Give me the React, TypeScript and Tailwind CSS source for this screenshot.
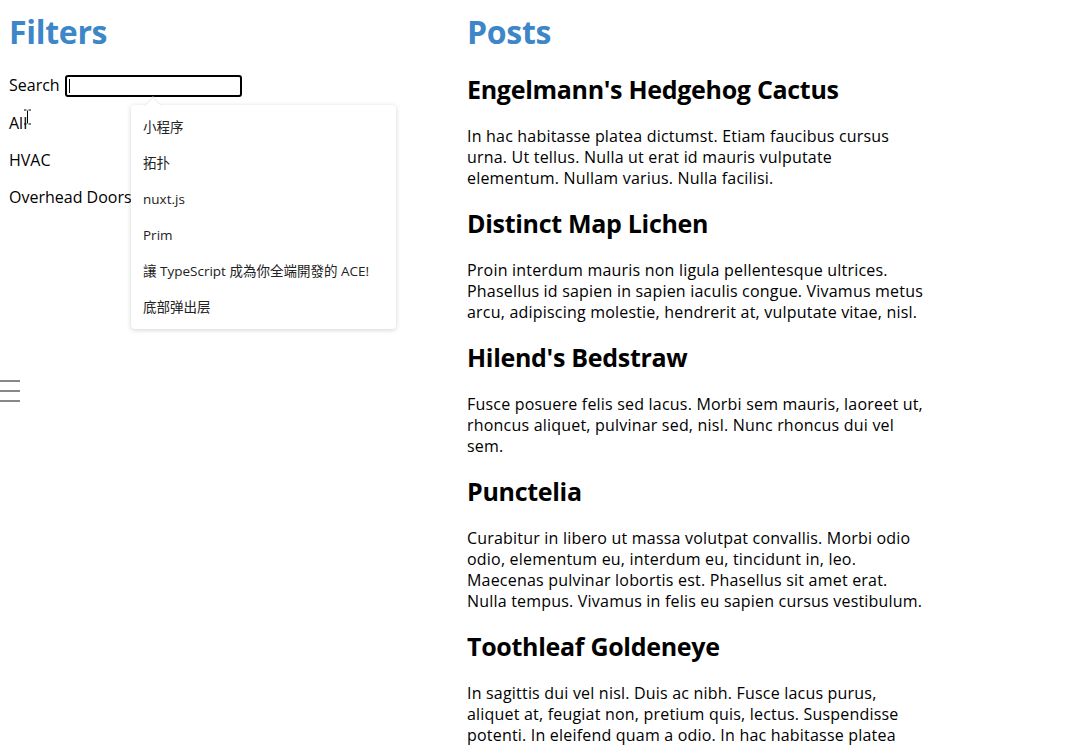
import React from "react";

const filters = ["All", "HVAC", "Overhead Doors"];

const suggestions = [
  "小程序",
  "拓扑",
  "nuxt.js",
  "Prim",
  "讓 TypeScript 成為你全端開發的 ACE!",
  "底部弹出层",
];

const posts = [
  {
    title: "Engelmann's Hedgehog Cactus",
    body: "In hac habitasse platea dictumst. Etiam faucibus cursus urna. Ut tellus. Nulla ut erat id mauris vulputate elementum. Nullam varius. Nulla facilisi.",
  },
  {
    title: "Distinct Map Lichen",
    body: "Proin interdum mauris non ligula pellentesque ultrices. Phasellus id sapien in sapien iaculis congue. Vivamus metus arcu, adipiscing molestie, hendrerit at, vulputate vitae, nisl.",
  },
  {
    title: "Hilend's Bedstraw",
    body: "Fusce posuere felis sed lacus. Morbi sem mauris, laoreet ut, rhoncus aliquet, pulvinar sed, nisl. Nunc rhoncus dui vel sem.",
  },
  {
    title: "Punctelia",
    body: "Curabitur in libero ut massa volutpat convallis. Morbi odio odio, elementum eu, interdum eu, tincidunt in, leo. Maecenas pulvinar lobortis est. Phasellus sit amet erat. Nulla tempus. Vivamus in felis eu sapien cursus vestibulum.",
  },
  {
    title: "Toothleaf Goldeneye",
    body: "In sagittis dui vel nisl. Duis ac nibh. Fusce lacus purus, aliquet at, feugiat non, pretium quis, lectus. Suspendisse potenti. In eleifend quam a odio. In hac habitasse platea dictumst.",
  },
];

export default function App() {
  return (
    <div
      className="flex h-[748px] overflow-hidden bg-white pl-[9px] text-black"
      style={{ fontFamily: "'Open Sans', 'Noto Sans CJK SC', sans-serif" }}
    >
      {/* Filters column */}
      <div className="relative w-[458px] shrink-0">
        <h1 className="mt-[10px] text-[32px] font-bold leading-[44px] tracking-[-0.3px] text-[#3d86c8]">Filters</h1>

        <div className="relative mt-[21px] flex items-center gap-[5px] text-[16px] leading-[22px]">
          <span className="-mt-[2px]">Search</span>
          <div className="flex h-[22px] w-[177px] items-center rounded-[3px] border-2 border-black px-[2px]">
            <span className="h-[14px] w-px bg-black" />
          </div>

          {/* autocomplete popover */}
          <div className="absolute left-[122px] top-[30px] z-10 w-[265px] rounded-[4px] bg-white py-[4px] shadow-[0_1px_5px_rgba(0,0,0,0.18)]">
            <div className="absolute -top-[6px] left-[16px] h-[12px] w-[12px] rotate-45 border-l border-t border-[#ececec] bg-white" />
            {suggestions.map((s) => (
              <div key={s} className="px-[12px] py-[8px] text-[13.5px] leading-[20px] text-[#222]">
                {s}
              </div>
            ))}
          </div>
        </div>

        <ul className="mt-[16px] flex flex-col gap-[16px] text-[16px] leading-[21px]">
          {filters.map((f) => (
            <li key={f} className="relative">
              {f}
              {f === "All" && (
                <svg className="absolute left-[14px] -top-[4px]" width="9" height="16" viewBox="0 0 9 16">
                  <path d="M1 1h2.5M5.5 1H8M4.5 1.5v13M1 15h2.5M5.5 15H8" stroke="#000" strokeWidth="1" fill="none" />
                </svg>
              )}
            </li>
          ))}
        </ul>

        <div className="-ml-[9px] mt-[172px] flex w-[20px] flex-col gap-[8px]">
          <span className="h-[2px] bg-[#888]" />
          <span className="h-[2px] bg-[#888]" />
          <span className="h-[2px] bg-[#888]" />
        </div>
      </div>

      {/* Posts column */}
      <div className="w-[458px] shrink-0">
        <h1 className="mt-[10px] text-[32px] font-bold leading-[44px] tracking-[-0.3px] text-[#3d86c8]">Posts</h1>
        {posts.map((p) => (
          <div key={p.title}>
            <h2 className="mt-[20px] text-[25px] font-bold leading-[31px] tracking-[-0.3px]">{p.title}</h2>
            <p className="mt-[21px] mb-[-1px] text-[16px] leading-[21px] tracking-[0.2px]">{p.body}</p>
          </div>
        ))}
      </div>
    </div>
  );
}
